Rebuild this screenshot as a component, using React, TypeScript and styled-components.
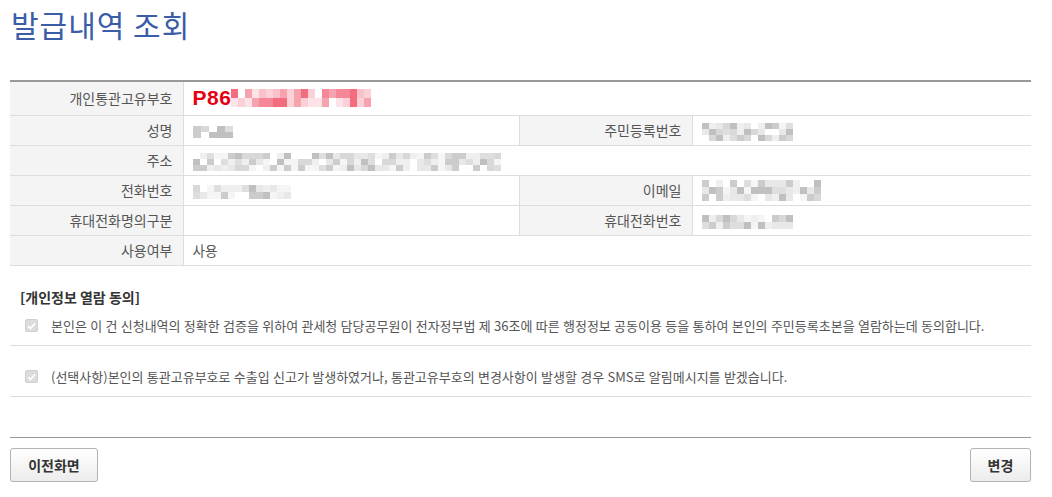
import React from "react";
import styled, { createGlobalStyle } from "styled-components";

const GlobalStyle = createGlobalStyle`
  html, body { margin: 0; padding: 0; background: #fff; }
  body { font-family: "Noto Sans CJK KR", "Noto Sans", sans-serif; color: #555; }
  * { box-sizing: border-box; }
`;

const Page = styled.div`
  width: 1052px;
  padding: 9px 21px 0 10px;
`;

const Title = styled.h1`
  margin: 0 0 41px;
  padding-left: 1px;
  font-size: 30px;
  line-height: 30px;
  font-weight: 400;
  color: #3b5da7;
  letter-spacing: 1px;
`;

const InfoTable = styled.table`
  width: 100%;
  table-layout: fixed;
  border-collapse: collapse;
  border-top: 2px solid #999;
  font-size: 13px;
`;

const Row = styled.tr<{ $tall?: boolean }>`
  height: ${(p) => (p.$tall ? 34 : 30)}px;
  border-bottom: 1px solid #ddd;
`;

const Label = styled.th<{ $side?: boolean }>`
  background: #f4f4f4;
  text-align: right;
  font-size: 14px;
  font-weight: 400;
  color: #555;
  padding: 0 10px 0 0;
  border-right: 1px solid #ddd;
  border-left: ${(p) => (p.$side ? "1px solid #ddd" : "none")};
  white-space: nowrap;
`;

const Value = styled.td`
  padding: 0 0 0 9px;
  font-size: 13.5px;
  color: #555;
  vertical-align: middle;
`;

const CodeWrap = styled.div`
  display: flex;
  align-items: center;
`;

const Code = styled.span`
  font-family: "Liberation Sans", "Noto Sans", sans-serif;
  font-weight: 700;
  font-size: 21px;
  color: #e60012;
  letter-spacing: 0.5px;
`;

const Grid = styled.div<{ $cols: number; $cw: number; $ch: number; $bg?: string }>`
  display: inline-grid;
  vertical-align: middle;
  grid-template-columns: repeat(${(p) => p.$cols}, ${(p) => p.$cw}px);
  grid-auto-rows: ${(p) => p.$ch}px;
  background: ${(p) => p.$bg || "transparent"};
`;

const Cell = styled.span<{ $c: string }>`
  background: ${(p) => p.$c};
`;

function rng(seed: number) {
  let s = seed;
  return () => {
    s = (s * 9301 + 49297) % 233280;
    return s / 233280;
  };
}

const GRAYS = ["#e8e8e8", "#d8d8d8", "#cccccc", "#c0c0c2", "#efefef", "#dedede", "#f5f5f5", "#ffffff"];
const PINKS = ["#fde3e7", "#f9c2ca", "#f7a3af", "#f58796", "#f36d7f", "#fbd0d6", "#ffffff"];

const Mosaic: React.FC<{
  cols: number;
  rows: number;
  cw: number;
  ch: number;
  seed: number;
  palette?: string[];
  bg?: string;
}> = ({ cols, rows, cw, ch, seed, palette = GRAYS, bg }) => {
  const r = rng(seed);
  const cells = [];
  for (let i = 0; i < cols * rows; i++) {
    cells.push(<Cell key={i} $c={palette[Math.floor(r() * palette.length)]} />);
  }
  return (
    <Grid $cols={cols} $cw={cw} $ch={ch} $bg={bg}>
      {cells}
    </Grid>
  );
};

const ConsentTitle = styled.div`
  margin-top: 22px;
  padding-left: 10px;
  font-size: 14px;
  line-height: 18px;
  font-weight: 700;
  color: #333;
`;

const ConsentList = styled.ul`
  list-style: none;
  margin: 0;
  padding: 0;
`;

const ConsentItem = styled.li`
  display: flex;
  align-items: center;
  gap: 13px;
  padding: 23px 0 11px 15px;
  border-bottom: 1px solid #ddd;
  font-size: 13px;
  line-height: 16px;
  color: #555;
  word-spacing: 0.4px;
  &:first-child { padding-top: 12px; }
`;

const Check = styled.span`
  display: inline-flex;
  align-items: center;
  justify-content: center;
  width: 13px;
  height: 13px;
  border-radius: 2px;
  background: #dcdcdc;
  border: 1px solid #cfcfcf;
  flex: none;
`;

const Footer = styled.div`
  margin-top: 40px;
  border-top: 1px solid #999;
  padding-top: 10px;
  display: flex;
  justify-content: space-between;
`;

const Button = styled.button<{ $w: number }>`
  width: ${(p) => p.$w}px;
  height: 34px;
  border: 1px solid #b4b4b4;
  border-radius: 3px;
  background: linear-gradient(#ffffff, #ececec);
  box-shadow: 0 1px 1px rgba(0, 0, 0, 0.08);
  font-family: "Noto Sans CJK KR", sans-serif;
  font-size: 14px;
  font-weight: 700;
  color: #333;
  padding: 0;
  cursor: pointer;
`;

const CheckIcon = () => (
  <svg width="9" height="8" viewBox="0 0 9 8">
    <path d="M1 4.2 L3.4 6.5 L8 1.3" fill="none" stroke="#fff" strokeWidth="1.8" />
  </svg>
);

export default function App() {
  return (
    <>
      <GlobalStyle />
      <Page>
        <Title>발급내역 조회</Title>
        <InfoTable>
          <colgroup>
            <col style={{ width: 173 }} />
            <col style={{ width: 336 }} />
            <col style={{ width: 173 }} />
            <col style={{ width: 339 }} />
          </colgroup>
          <tbody>
            <Row $tall>
              <Label>개인통관고유부호</Label>
              <Value colSpan={3}>
                <CodeWrap>
                  <Code>P86</Code>
                  <Mosaic cols={20} rows={2} cw={7} ch={9} seed={11} palette={PINKS} />
                </CodeWrap>
              </Value>
            </Row>
            <Row>
              <Label>성명</Label>
              <Value>
                <Mosaic cols={5} rows={2} cw={8} ch={6} seed={3} />
              </Value>
              <Label $side>주민등록번호</Label>
              <Value>
                <Mosaic cols={13} rows={3} cw={7} ch={6} seed={7} />
              </Value>
            </Row>
            <Row>
              <Label>주소</Label>
              <Value colSpan={3}>
                <Mosaic cols={44} rows={3} cw={7} ch={6} seed={19} />
              </Value>
            </Row>
            <Row>
              <Label>전화번호</Label>
              <Value>
                <Mosaic cols={14} rows={2} cw={7} ch={7} seed={23} />
              </Value>
              <Label $side>이메일</Label>
              <Value>
                <Mosaic cols={17} rows={3} cw={7} ch={7} seed={29} />
              </Value>
            </Row>
            <Row>
              <Label>휴대전화명의구분</Label>
              <Value />
              <Label $side>휴대전화번호</Label>
              <Value>
                <Mosaic cols={13} rows={2} cw={7} ch={7} seed={31} />
              </Value>
            </Row>
            <Row>
              <Label>사용여부</Label>
              <Value colSpan={3}>사용</Value>
            </Row>
          </tbody>
        </InfoTable>

        <ConsentTitle>[개인정보 열람 동의]</ConsentTitle>
        <ConsentList>
          <ConsentItem>
            <Check>
              <CheckIcon />
            </Check>
            본인은 이 건 신청내역의 정확한 검증을 위하여 관세청 담당공무원이 전자정부법 제 36조에 따른 행정정보 공동이용 등을 통하여 본인의 주민등록초본을 열람하는데 동의합니다.
          </ConsentItem>
          <ConsentItem>
            <Check>
              <CheckIcon />
            </Check>
            (선택사항)본인의 통관고유부호로 수출입 신고가 발생하였거나, 통관고유부호의 변경사항이 발생할 경우 SMS로 알림메시지를 받겠습니다.
          </ConsentItem>
        </ConsentList>

        <Footer>
          <Button $w={88}>이전화면</Button>
          <Button $w={61}>변경</Button>
        </Footer>
      </Page>
    </>
  );
}
